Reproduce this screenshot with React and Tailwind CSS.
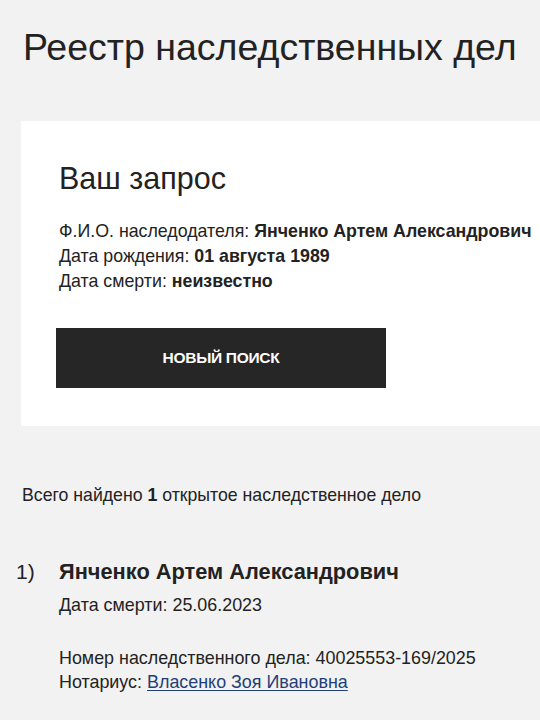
import React from 'react';

const App = () => {
  return (
    <div
      className="min-h-[720px] w-[540px] overflow-hidden bg-[#f2f2f2] text-[#222222]"
      style={{ fontFamily: '"Liberation Sans", Arial, sans-serif' }}
    >
      {/* Title */}
      <h1 className="pl-[23px] pt-[27px] text-[37.5px] leading-[40px] whitespace-nowrap">
        Реестр наследственных дел
      </h1>

      {/* Request card */}
      <div className="ml-[21px] mt-[54px] w-[540px] bg-white pl-[38px] pt-[41px] pb-[38px]">
        <h2 className="text-[30.5px] leading-[32px]">Ваш запрос</h2>
        <div className="mt-[25px] text-[17.8px] leading-[25px] font-light whitespace-nowrap">
          <p>
            Ф.И.О. наследодателя: <b className="font-bold">Янченко Артем Александрович</b>
          </p>
          <p>
            Дата рождения: <b className="font-bold">01 августа 1989</b>
          </p>
          <p>
            Дата смерти: <b className="font-bold">неизвестно</b>
          </p>
        </div>
        <button className="ml-[-3px] mt-[34px] flex h-[60px] w-[330px] items-center justify-center bg-[#262626] text-[15.5px] font-bold tracking-[-0.3px] text-white">
          НОВЫЙ ПОИСК
        </button>
      </div>

      {/* Results */}
      <p className="pl-[22px] pt-[58px] text-[17.7px] leading-[22px]">
        Всего найдено <b className="font-bold">1</b> открытое наследственное дело
      </p>

      <div className="mt-[53px] flex">
        <span className="w-[59px] shrink-0 pl-[16px] text-[21px] leading-[26px]">1)</span>
        <div>
          <p className="text-[21.8px] leading-[26px] font-bold">Янченко Артем Александрович</p>
          <p className="mt-[9px] text-[17.9px] leading-[22px]">Дата смерти: 25.06.2023</p>
          <p className="mt-[30px] text-[17.9px] leading-[24px]">
            Номер наследственного дела: 40025553-169/2025
          </p>
          <p className="text-[17.9px] leading-[24px]">
            Нотариус:{' '}
            <a href="#" className="text-[#1f3f77] underline underline-offset-2">
              Власенко Зоя Ивановна
            </a>
          </p>
        </div>
      </div>
    </div>
  );
};

export default App;
